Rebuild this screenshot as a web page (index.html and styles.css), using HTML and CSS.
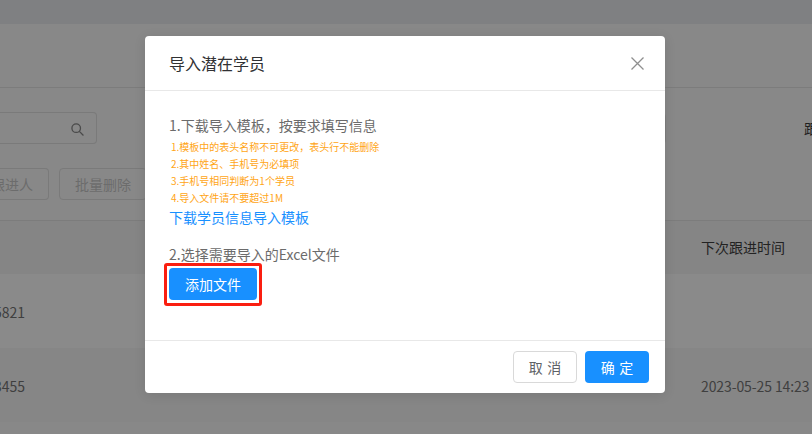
FILE: index.html
```html
<!DOCTYPE html>
<html lang="zh-CN">
<head>
<meta charset="utf-8">
<title>导入潜在学员</title>
<link rel="stylesheet" href="styles.css">
</head>
<body>
<div class="page">
  <div class="topband"></div>
  <div class="titlebar"></div>
  <div class="filters">
    <div class="search">
      <svg class="search-icon" width="13" height="13" viewBox="0 0 14 14" fill="none" stroke="#4a4a4a" stroke-width="1.4"><circle cx="5.6" cy="5.6" r="4.6"/><path d="M9 9L13.4 13.4"/></svg>
    </div>
    <div class="filter-box"></div>
    <span class="filter-label">跟</span>
  </div>
  <div class="actions">
    <span class="ghost ghost-clip"><span>设置跟进人</span></span>
    <span class="ghost">批量删除</span>
  </div>
  <div class="row head-row">
    <span class="cell-left"></span>
    <span class="cell-right head-text">下次跟进时间</span>
  </div>
  <div class="row data-row">
    <span class="cell-left"><span>13800015821</span></span>
    <span class="cell-right"></span>
  </div>
  <div class="row data-row alt">
    <span class="cell-left"><span>13900003455</span></span>
    <span class="cell-right date">2023-05-25 14:23</span>
  </div>
</div>

<div class="modal">
  <div class="modal-head">
    <span class="modal-title">导入潜在学员</span>
    <svg class="close" width="13" height="13" viewBox="0 0 13 13" fill="none" stroke="#8f8f8f" stroke-width="1.3"><path d="M0.5 0.5L12.5 12.5M12.5 0.5L0.5 12.5"/></svg>
  </div>
  <div class="modal-body">
    <p class="step">1.下载导入模板，按要求填写信息</p>
    <ul class="notes">
      <li>1.模板中的表头名称不可更改，表头行不能删除</li>
      <li>2.其中姓名、手机号为必填项</li>
      <li>3.手机号相同判断为1个学员</li>
      <li>4.导入文件请不要超过1M</li>
    </ul>
    <a class="link">下载学员信息导入模板</a>
    <p class="step step-two">2.选择需要导入的Excel文件</p>
    <div class="highlight"><button class="btn-primary add">添加文件</button></div>
  </div>
  <div class="modal-foot">
    <button class="btn-default">取 消</button>
    <button class="btn-primary ok">确 定</button>
  </div>
</div>
</body>
</html>
```
FILE: styles.css
```css
* { box-sizing: border-box; }
html, body { margin: 0; height: 100%; }
body {
  position: relative;
  width: 812px;
  height: 434px;
  overflow: hidden;
  background: #888888;
  font-family: "Noto Sans CJK SC", "Noto Sans", sans-serif;
  font-size: 14px;
}
.topband { height: 24px; background: #7f8082; }
.titlebar { height: 64px; border-bottom: 1px solid #7c7c7c; background: #888888; }
.filters {
  display: flex;
  align-items: center;
  height: 32px;
  margin-top: 24px;
}
.search {
  flex: none;
  width: 97px;
  height: 32px;
  display: flex;
  align-items: center;
  justify-content: flex-end;
  padding-right: 12px;
  border: 1px solid #7a7a7a;
  border-left: 0;
  border-radius: 0 4px 4px 0;
}
.search-icon { margin-top: 2px; }
.filter-box {
  flex: none;
  width: 469px;
  height: 31px;
  margin-left: 100px;
  border: 1px solid #7e7e7e;
  border-radius: 4px;
}
.filter-label { flex: none; margin-left: 138px; color: #1f1f1f; line-height: 31px; white-space: nowrap; }
.actions {
  display: flex;
  gap: 10px;
  height: 32px;
  margin-top: 24px;
}
.ghost {
  display: flex;
  align-items: center;
  justify-content: center;
  width: 88px;
  height: 32px;
  border: 1px solid #7a7a7a;
  border-radius: 4px;
  color: #6c6c6c;
  flex: none;
}
.ghost-clip {
  width: 49px;
  justify-content: flex-end;
  padding-right: 15px;
  border-left: 0;
  border-radius: 0 4px 4px 0;
  overflow: hidden;
  white-space: nowrap;
}
.ghost-clip span { flex: none; }
.row {
  display: flex;
  justify-content: space-between;
  align-items: center;
  background: #8a8a8a;
  color: #3f3f3f;
}
.head-row {
  height: 54px;
  margin-top: 20px;
  padding-bottom: 1px;
  border-top: 1px solid #7c7c7c;
  background: #858585;
  color: #222222;
}
.data-row { height: 74px; padding-top: 2px; }
.alt { background: #868686; }
.cell-left {
  display: flex;
  justify-content: flex-end;
  width: 25px;
  overflow: hidden;
  white-space: nowrap;
}
.cell-left span { flex: none; }
.cell-right { width: 111px; white-space: nowrap; }
.date { letter-spacing: -0.1px; }
.head-text { color: #222222; }

.modal {
  position: absolute;
  left: 145px;
  top: 36px;
  width: 520px;
  height: 357px;
  display: flex;
  flex-direction: column;
  background: #ffffff;
  border-radius: 4px;
  box-shadow: 0 2px 12px rgba(0, 0, 0, 0.1);
}
.modal-head {
  display: flex;
  align-items: center;
  justify-content: space-between;
  height: 55px;
  padding: 0 21px 0 24px;
  border-bottom: 1px solid #e8e8e8;
}
.modal-title { margin-top: -1px; font-size: 16px; color: #303133; }
.close { margin-top: 1px; }
.modal-body { flex: 1; padding: 23px 24px 0; }
.step { margin: 0; line-height: 22px; color: #6b6b6b; }
.notes {
  list-style: none;
  margin: 2px 0 0;
  padding: 0;
  font-size: 10px;
  line-height: 17px;
  color: #ffa516;
}
.notes li { padding-left: 2px; }
.link {
  display: block;
  line-height: 22px;
  color: #1890ff;
}
.step-two { margin-top: 15px; }
.highlight {
  display: inline-block;
  margin: -2px 0 0 -5px;
  padding: 2px 2px 3px;
  border: 3px solid #fa1e10;
  border-radius: 3px;
}
button {
  font-family: inherit;
  font-size: 14px;
  cursor: pointer;
  display: block;
}
.btn-primary {
  height: 32px;
  border: 0;
  border-radius: 4px;
  background: #1890ff;
  color: #ffffff;
}
.add { width: 88px; padding: 0; }
.modal-foot {
  display: flex;
  justify-content: flex-end;
  gap: 8px;
  height: 53px;
  padding: 10px 16px 0 0;
  border-top: 1px solid #e8e8e8;
}
.btn-default {
  width: 64px;
  height: 32px;
  padding: 0;
  background: #ffffff;
  border: 1px solid #d9d9d9;
  border-radius: 4px;
  color: #606266;
  word-spacing: 1.5px;
}
.ok { width: 64px; padding: 0; word-spacing: 1.5px; }
```
